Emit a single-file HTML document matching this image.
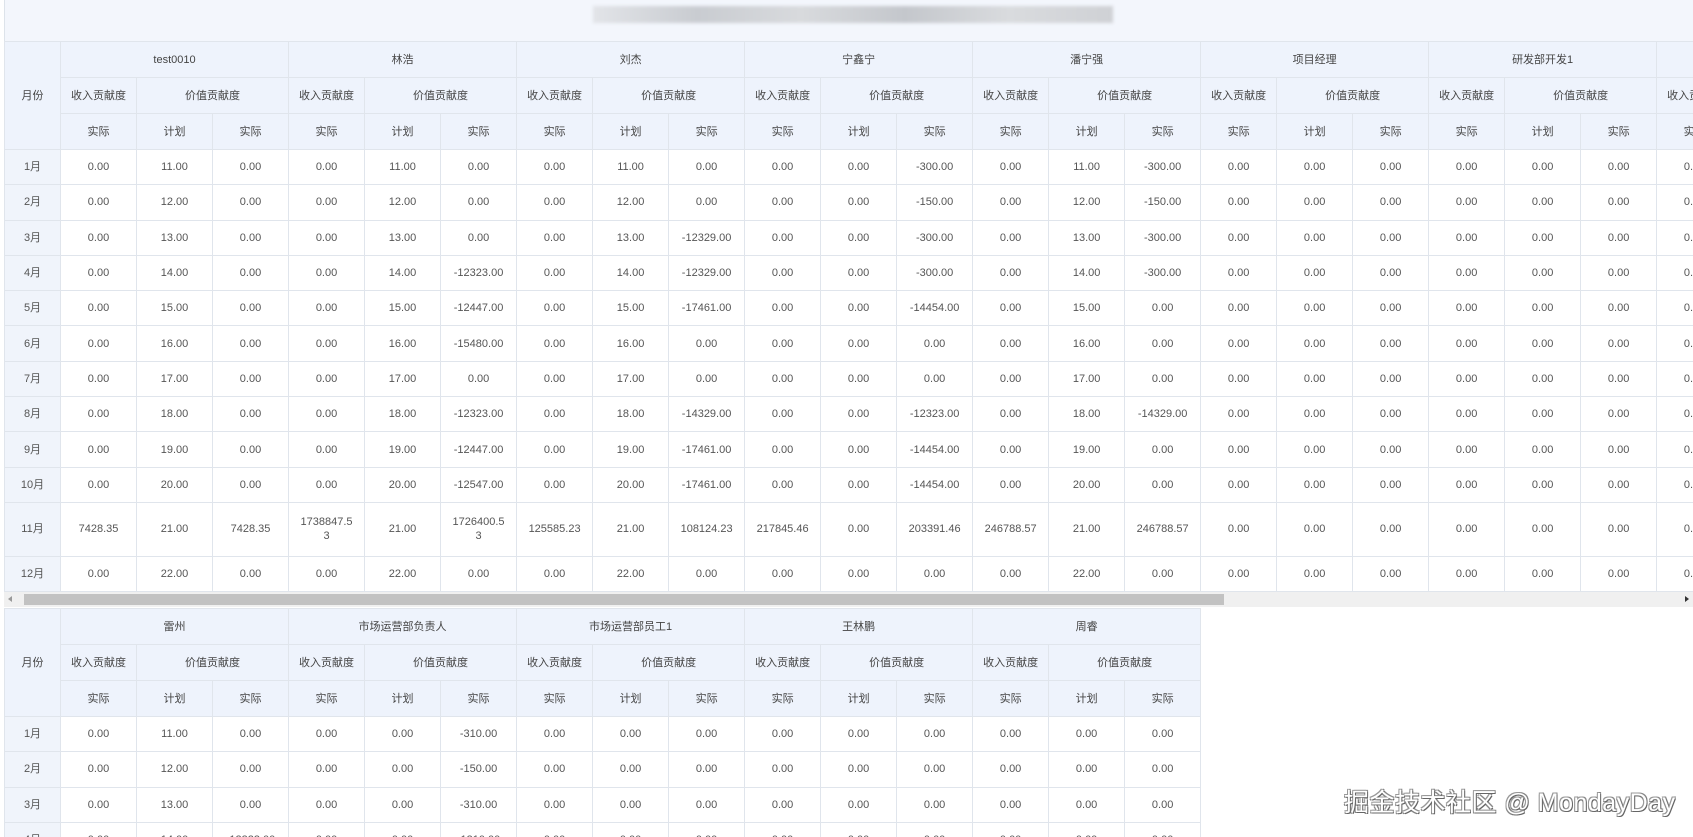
<!DOCTYPE html>
<html><head><meta charset="utf-8"><style>
body{margin:0;width:1693px;height:837px;overflow:hidden;background:#fff;font-family:"Liberation Sans","Noto Sans CJK SC",sans-serif;position:relative}
.top{position:absolute;left:4px;top:0;width:1689px;height:41px;background:#f3f6fc;border-left:1px solid #dde3ea}
.blur{position:absolute;left:588px;top:6px;width:520px;height:17px;background:linear-gradient(90deg,#e2e4e8,#c9ccd1 20%,#d8dadd 40%,#c4c7cc 60%,#d9dbde 80%,#cfd1d5);filter:blur(1.5px)}
.wrap{position:absolute;left:4px;overflow:hidden}
table{border-collapse:collapse;table-layout:fixed;font-size:11px;color:#555}
td{border:1px solid #e0e5ec;text-align:center;padding:0;overflow:hidden;white-space:nowrap;line-height:14px}
.h td{background:#eef3fc;color:#444;height:35px}
td.m{background:#f0f4fb}
tr.r td{height:34.3px}
tr.t td{height:53px}
.sb{position:absolute;left:4px;top:592px;width:1689px;height:15px;background:#f0f0f0}
.th{position:absolute;left:20px;top:2px;width:1200px;height:11px;background:#c2c2c2}
.wm{position:absolute;left:1344px;top:783px;font-size:25px;color:#fff;text-shadow:1px 1px 0 #666,-1px -1px 0 #999,1px -1px 0 #888,-1px 1px 0 #888;letter-spacing:0.5px}
</style></head><body>
<div class="top"><div class="blur"></div></div>
<div class="wrap" style="top:41px;width:1689px;height:551px">
<table style="width:1740px">
<colgroup><col style="width:56px"><col span="24" style="width:76px"></colgroup>
<tr class="h"><td rowspan="3">月份</td><td colspan="3">test0010</td><td colspan="3">林浩</td><td colspan="3">刘杰</td><td colspan="3">宁鑫宁</td><td colspan="3">潘宁强</td><td colspan="3">项目经理</td><td colspan="3">研发部开发1</td><td colspan="3"></td></tr>
<tr class="h"><td>收入贡献度</td><td colspan="2">价值贡献度</td><td>收入贡献度</td><td colspan="2">价值贡献度</td><td>收入贡献度</td><td colspan="2">价值贡献度</td><td>收入贡献度</td><td colspan="2">价值贡献度</td><td>收入贡献度</td><td colspan="2">价值贡献度</td><td>收入贡献度</td><td colspan="2">价值贡献度</td><td>收入贡献度</td><td colspan="2">价值贡献度</td><td>收入贡献度</td><td colspan="2">价值贡献度</td></tr>
<tr class="h"><td>实际</td><td>计划</td><td>实际</td><td>实际</td><td>计划</td><td>实际</td><td>实际</td><td>计划</td><td>实际</td><td>实际</td><td>计划</td><td>实际</td><td>实际</td><td>计划</td><td>实际</td><td>实际</td><td>计划</td><td>实际</td><td>实际</td><td>计划</td><td>实际</td><td>实际</td><td>计划</td><td>实际</td></tr>
<tr class="r"><td class="m">1月</td><td>0.00</td><td>11.00</td><td>0.00</td><td>0.00</td><td>11.00</td><td>0.00</td><td>0.00</td><td>11.00</td><td>0.00</td><td>0.00</td><td>0.00</td><td>-300.00</td><td>0.00</td><td>11.00</td><td>-300.00</td><td>0.00</td><td>0.00</td><td>0.00</td><td>0.00</td><td>0.00</td><td>0.00</td><td>0.00</td><td>0.00</td><td>0.00</td></tr>
<tr class="r"><td class="m">2月</td><td>0.00</td><td>12.00</td><td>0.00</td><td>0.00</td><td>12.00</td><td>0.00</td><td>0.00</td><td>12.00</td><td>0.00</td><td>0.00</td><td>0.00</td><td>-150.00</td><td>0.00</td><td>12.00</td><td>-150.00</td><td>0.00</td><td>0.00</td><td>0.00</td><td>0.00</td><td>0.00</td><td>0.00</td><td>0.00</td><td>0.00</td><td>0.00</td></tr>
<tr class="r"><td class="m">3月</td><td>0.00</td><td>13.00</td><td>0.00</td><td>0.00</td><td>13.00</td><td>0.00</td><td>0.00</td><td>13.00</td><td>-12329.00</td><td>0.00</td><td>0.00</td><td>-300.00</td><td>0.00</td><td>13.00</td><td>-300.00</td><td>0.00</td><td>0.00</td><td>0.00</td><td>0.00</td><td>0.00</td><td>0.00</td><td>0.00</td><td>0.00</td><td>0.00</td></tr>
<tr class="r"><td class="m">4月</td><td>0.00</td><td>14.00</td><td>0.00</td><td>0.00</td><td>14.00</td><td>-12323.00</td><td>0.00</td><td>14.00</td><td>-12329.00</td><td>0.00</td><td>0.00</td><td>-300.00</td><td>0.00</td><td>14.00</td><td>-300.00</td><td>0.00</td><td>0.00</td><td>0.00</td><td>0.00</td><td>0.00</td><td>0.00</td><td>0.00</td><td>0.00</td><td>0.00</td></tr>
<tr class="r"><td class="m">5月</td><td>0.00</td><td>15.00</td><td>0.00</td><td>0.00</td><td>15.00</td><td>-12447.00</td><td>0.00</td><td>15.00</td><td>-17461.00</td><td>0.00</td><td>0.00</td><td>-14454.00</td><td>0.00</td><td>15.00</td><td>0.00</td><td>0.00</td><td>0.00</td><td>0.00</td><td>0.00</td><td>0.00</td><td>0.00</td><td>0.00</td><td>0.00</td><td>0.00</td></tr>
<tr class="r"><td class="m">6月</td><td>0.00</td><td>16.00</td><td>0.00</td><td>0.00</td><td>16.00</td><td>-15480.00</td><td>0.00</td><td>16.00</td><td>0.00</td><td>0.00</td><td>0.00</td><td>0.00</td><td>0.00</td><td>16.00</td><td>0.00</td><td>0.00</td><td>0.00</td><td>0.00</td><td>0.00</td><td>0.00</td><td>0.00</td><td>0.00</td><td>0.00</td><td>0.00</td></tr>
<tr class="r"><td class="m">7月</td><td>0.00</td><td>17.00</td><td>0.00</td><td>0.00</td><td>17.00</td><td>0.00</td><td>0.00</td><td>17.00</td><td>0.00</td><td>0.00</td><td>0.00</td><td>0.00</td><td>0.00</td><td>17.00</td><td>0.00</td><td>0.00</td><td>0.00</td><td>0.00</td><td>0.00</td><td>0.00</td><td>0.00</td><td>0.00</td><td>0.00</td><td>0.00</td></tr>
<tr class="r"><td class="m">8月</td><td>0.00</td><td>18.00</td><td>0.00</td><td>0.00</td><td>18.00</td><td>-12323.00</td><td>0.00</td><td>18.00</td><td>-14329.00</td><td>0.00</td><td>0.00</td><td>-12323.00</td><td>0.00</td><td>18.00</td><td>-14329.00</td><td>0.00</td><td>0.00</td><td>0.00</td><td>0.00</td><td>0.00</td><td>0.00</td><td>0.00</td><td>0.00</td><td>0.00</td></tr>
<tr class="r"><td class="m">9月</td><td>0.00</td><td>19.00</td><td>0.00</td><td>0.00</td><td>19.00</td><td>-12447.00</td><td>0.00</td><td>19.00</td><td>-17461.00</td><td>0.00</td><td>0.00</td><td>-14454.00</td><td>0.00</td><td>19.00</td><td>0.00</td><td>0.00</td><td>0.00</td><td>0.00</td><td>0.00</td><td>0.00</td><td>0.00</td><td>0.00</td><td>0.00</td><td>0.00</td></tr>
<tr class="r"><td class="m">10月</td><td>0.00</td><td>20.00</td><td>0.00</td><td>0.00</td><td>20.00</td><td>-12547.00</td><td>0.00</td><td>20.00</td><td>-17461.00</td><td>0.00</td><td>0.00</td><td>-14454.00</td><td>0.00</td><td>20.00</td><td>0.00</td><td>0.00</td><td>0.00</td><td>0.00</td><td>0.00</td><td>0.00</td><td>0.00</td><td>0.00</td><td>0.00</td><td>0.00</td></tr>
<tr class="t"><td class="m">11月</td><td>7428.35</td><td>21.00</td><td>7428.35</td><td>1738847.5<br>3</td><td>21.00</td><td>1726400.5<br>3</td><td>125585.23</td><td>21.00</td><td>108124.23</td><td>217845.46</td><td>0.00</td><td>203391.46</td><td>246788.57</td><td>21.00</td><td>246788.57</td><td>0.00</td><td>0.00</td><td>0.00</td><td>0.00</td><td>0.00</td><td>0.00</td><td>0.00</td><td>0.00</td><td>0.00</td></tr>
<tr class="r"><td class="m">12月</td><td>0.00</td><td>22.00</td><td>0.00</td><td>0.00</td><td>22.00</td><td>0.00</td><td>0.00</td><td>22.00</td><td>0.00</td><td>0.00</td><td>0.00</td><td>0.00</td><td>0.00</td><td>22.00</td><td>0.00</td><td>0.00</td><td>0.00</td><td>0.00</td><td>0.00</td><td>0.00</td><td>0.00</td><td>0.00</td><td>0.00</td><td>0.00</td></tr>
</table></div>
<div class="sb"><div style="position:absolute;left:4px;top:4px;width:0;height:0;border:3px solid transparent;border-right:4px solid #999;border-left:0"></div><div class="th"></div><div style="position:absolute;right:4px;top:4px;width:0;height:0;border:3px solid transparent;border-left:4px solid #333;border-right:0"></div></div>
<div class="wrap" style="top:608px;width:1300px;height:229px">
<table style="width:1197px">
<colgroup><col style="width:56px"><col span="15" style="width:76px"></colgroup>
<tr class="h"><td rowspan="3">月份</td><td colspan="3">雷州</td><td colspan="3">市场运营部负责人</td><td colspan="3">市场运营部员工1</td><td colspan="3">王林鹏</td><td colspan="3">周睿</td></tr>
<tr class="h"><td>收入贡献度</td><td colspan="2">价值贡献度</td><td>收入贡献度</td><td colspan="2">价值贡献度</td><td>收入贡献度</td><td colspan="2">价值贡献度</td><td>收入贡献度</td><td colspan="2">价值贡献度</td><td>收入贡献度</td><td colspan="2">价值贡献度</td></tr>
<tr class="h"><td>实际</td><td>计划</td><td>实际</td><td>实际</td><td>计划</td><td>实际</td><td>实际</td><td>计划</td><td>实际</td><td>实际</td><td>计划</td><td>实际</td><td>实际</td><td>计划</td><td>实际</td></tr>
<tr class="r"><td class="m">1月</td><td>0.00</td><td>11.00</td><td>0.00</td><td>0.00</td><td>0.00</td><td>-310.00</td><td>0.00</td><td>0.00</td><td>0.00</td><td>0.00</td><td>0.00</td><td>0.00</td><td>0.00</td><td>0.00</td><td>0.00</td></tr>
<tr class="r"><td class="m">2月</td><td>0.00</td><td>12.00</td><td>0.00</td><td>0.00</td><td>0.00</td><td>-150.00</td><td>0.00</td><td>0.00</td><td>0.00</td><td>0.00</td><td>0.00</td><td>0.00</td><td>0.00</td><td>0.00</td><td>0.00</td></tr>
<tr class="r"><td class="m">3月</td><td>0.00</td><td>13.00</td><td>0.00</td><td>0.00</td><td>0.00</td><td>-310.00</td><td>0.00</td><td>0.00</td><td>0.00</td><td>0.00</td><td>0.00</td><td>0.00</td><td>0.00</td><td>0.00</td><td>0.00</td></tr>
<tr class="r"><td class="m">4月</td><td>0.00</td><td>14.00</td><td>-12323.00</td><td>0.00</td><td>0.00</td><td>-1310.00</td><td>0.00</td><td>0.00</td><td>0.00</td><td>0.00</td><td>0.00</td><td>0.00</td><td>0.00</td><td>0.00</td><td>0.00</td></tr>
</table></div>
<div class="wm">掘金技术社区 @ MondayDay</div>
</body></html>
